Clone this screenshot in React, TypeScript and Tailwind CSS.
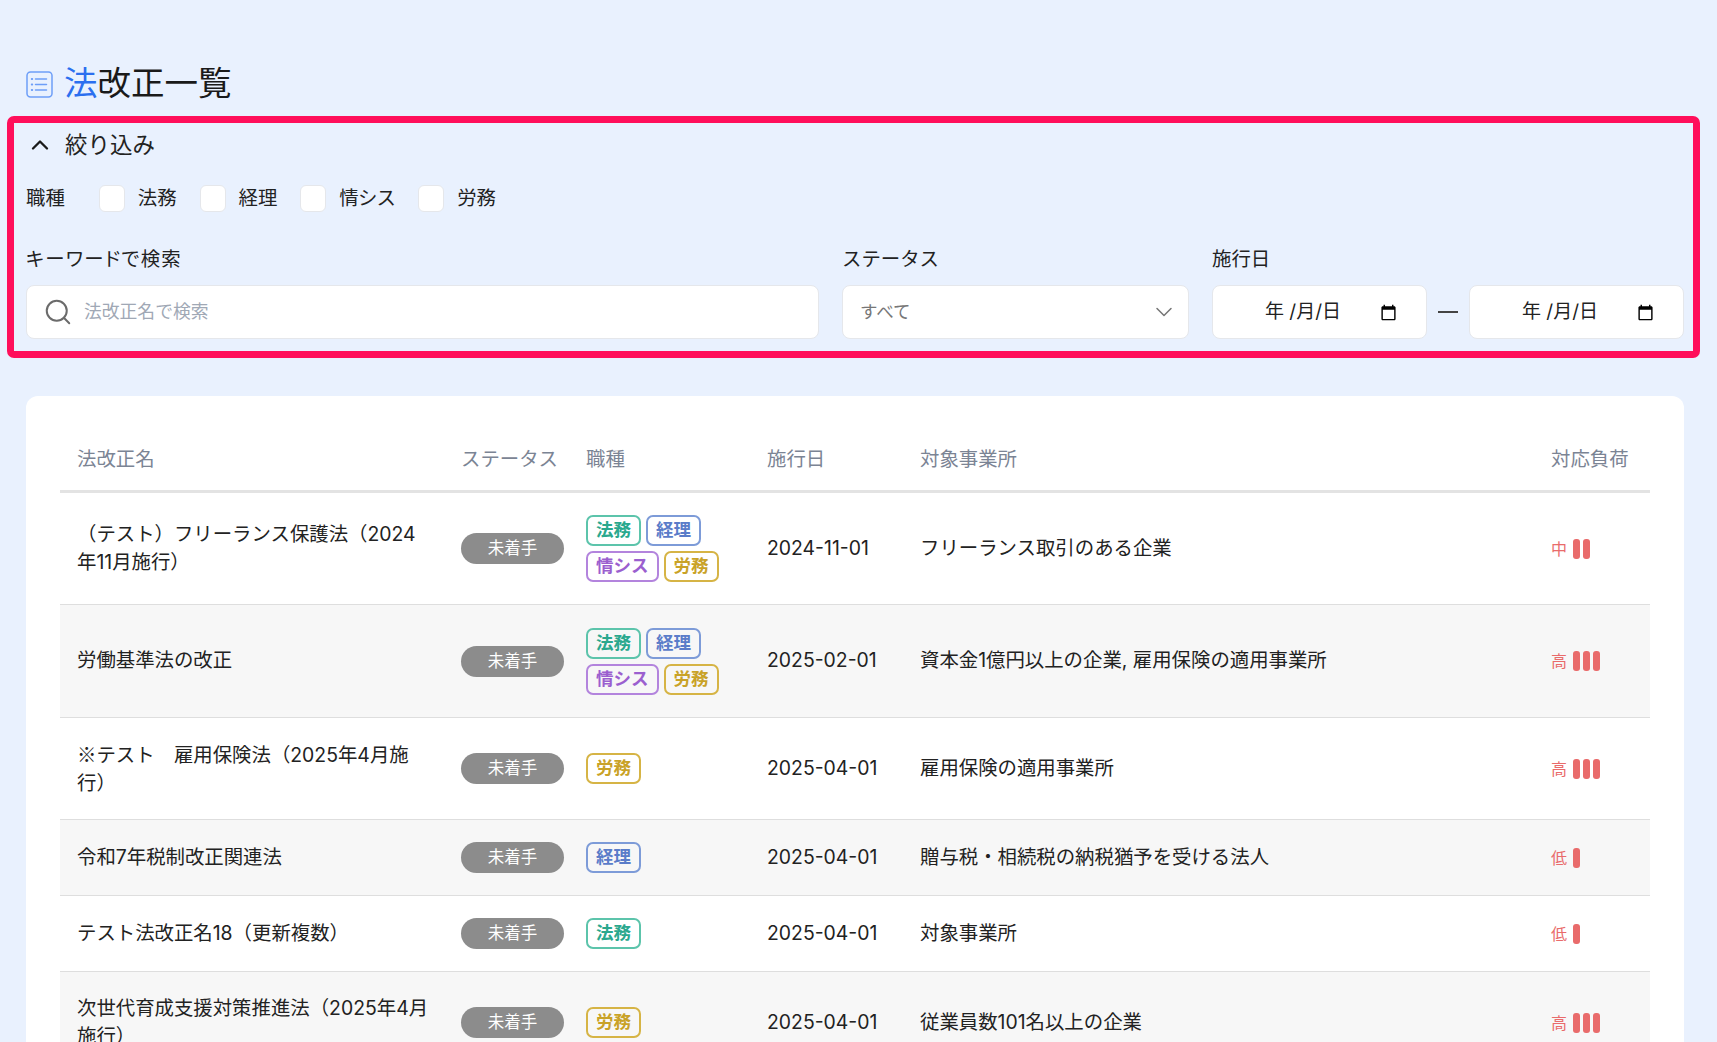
import type { ReactNode } from "react";
import { ChevronDown, ChevronUp, Search } from "lucide-react";

type Job = "法務" | "経理" | "情シス" | "労務";
type Load = "低" | "中" | "高";

type Row = {
  name: ReactNode;
  jobs: Job[];
  date: string;
  target: string;
  load: Load;
  height: string;
};

const jobStyles: Record<Job, string> = {
  法務: "border-[#5cc4ab] text-[#2aa88e]",
  経理: "border-[#7d9bd8] text-[#5a7cc9]",
  情シス: "border-[#b384dd] text-[#9b5fcf]",
  労務: "border-[#d6b445] text-[#c9a227]",
};

const loadBars: Record<Load, number> = { 低: 1, 中: 2, 高: 3 };

const rows: Row[] = [
  { name: "（テスト）フリーランス保護法（2024年11月施行）", jobs: ["法務", "経理", "情シス", "労務"], date: "2024-11-01", target: "フリーランス取引のある企業", load: "中", height: "h-[112px]" },
  { name: "労働基準法の改正", jobs: ["法務", "経理", "情シス", "労務"], date: "2025-02-01", target: "資本金1億円以上の企業, 雇用保険の適用事業所", load: "高", height: "h-[113px]" },
  {
    name: (
      <>
        <span className="font-['Noto_Sans_CJK_JP']">※</span>テスト　雇用保険法（2025年4月施行）
      </>
    ),
    jobs: ["労務"],
    date: "2025-04-01",
    target: "雇用保険の適用事業所",
    load: "高",
    height: "h-[102px]",
  },
  { name: "令和7年税制改正関連法", jobs: ["経理"], date: "2025-04-01", target: "贈与税・相続税の納税猶予を受ける法人", load: "低", height: "h-[76px]" },
  { name: "テスト法改正名18（更新複数）", jobs: ["法務"], date: "2025-04-01", target: "対象事業所", load: "低", height: "h-[76px]" },
  { name: "次世代育成支援対策推進法（2025年4月施行）", jobs: ["労務"], date: "2025-04-01", target: "従業員数101名以上の企業", load: "高", height: "h-[102px]" },
];

const headers = [
  { label: "法改正名", width: "w-[384px]" },
  { label: "ステータス", width: "w-[125px]" },
  { label: "職種", width: "w-[181px]" },
  { label: "施行日", width: "w-[153px]" },
  { label: "対象事業所", width: "" },
  { label: "対応負荷", width: "w-[116px]" },
];

function ListIcon() {
  return (
    <svg width="27" height="27" viewBox="0 0 27 27" fill="none" stroke="#6d9ef8" strokeWidth="1.5" strokeLinecap="round">
      <rect x="1" y="1" width="25" height="25" rx="3.5" />
      <path d="M9.5 8h11M9.5 13.5h11M9.5 19h11" />
      <path d="M5.8 8h.4M5.8 13.5h.4M5.8 19h.4" strokeWidth="2" />
    </svg>
  );
}

function CalendarIcon() {
  return (
    <svg width="17" height="17" viewBox="0 0 24 24" fill="#000">
      <path d="M20 3h-1V1h-2v2H7V1H5v2H4c-1.1 0-2 .9-2 2v16c0 1.1.9 2 2 2h16c1.1 0 2-.9 2-2V5c0-1.1-.9-2-2-2zm0 18H4V8h16v13z" />
    </svg>
  );
}

function DateField() {
  return (
    <div className="flex h-[54px] w-[215px] items-center justify-between rounded-[8px] border border-[#e5e7eb] bg-white pl-[52px] pr-[29px] text-[19px] text-[#222]">
      <span>年 /月/日</span>
      <CalendarIcon />
    </div>
  );
}

export default function App() {
  return (
    <div className="h-screen overflow-hidden bg-[#e9f1fe] pl-[26px] pr-[33px] pt-[65px] font-['Inter','Noto_Sans_CJK_JP',sans-serif] text-[19.4px] text-[#222]">
      <div className="flex h-[38px] items-center gap-[11px]">
        <ListIcon />
        <h1 className="text-[33.5px] font-normal leading-none text-[#1a1a1a]">
          <span className="text-[#2b6fef]">法</span>改正一覧
        </h1>
      </div>

      <section className="-ml-[19px] -mr-[16px] mt-[13px] rounded-[7px] border-[7px] border-[#ff0f5b] pb-[12px] pl-[12px] pr-[9px]">
        <button type="button" className="flex h-[44px] items-center gap-[11px] text-[22.5px] text-[#222]">
          <ChevronUp size={28} strokeWidth={2} className="text-[#1a1a1a]" />
          絞り込み
        </button>

        <div className="mt-[18px] flex h-[27px] items-center">
          <span className="mr-[34px]">職種</span>
          {(["法務", "経理", "情シス", "労務"] as Job[]).map((job) => (
            <label key={job} className="mr-[23px] flex items-center gap-[13px]">
              <span className="h-[27px] w-[26px] rounded-[6px] border border-[#e5e7eb] bg-white" />
              <span className={job === "情シス" ? "tracking-[-0.8px]" : ""}>{job}</span>
            </label>
          ))}
        </div>

        <div className="mt-[33px] flex gap-[23px]">
          <div className="flex-1">
            <p className="leading-[28px] tracking-[1.3px] [font-feature-settings:'palt']">キーワードで検索</p>
            <div className="mt-[12px] flex h-[54px] items-center gap-[11px] rounded-[8px] border border-[#e5e7eb] bg-white pl-[16px] text-[17.8px] text-[#a0a8b5]">
              <Search size={30} strokeWidth={1.6} className="text-[#6b6b6b]" />
              法改正名で検索
            </div>
          </div>
          <div className="w-[347px]">
            <p className="leading-[28px]">ステータス</p>
            <div className="mt-[12px] flex h-[54px] items-center justify-between rounded-[8px] border border-[#e5e7eb] bg-white pl-[17px] pr-[10px] text-[17.5px] text-[#777]">
              すべて
              <ChevronDown size={28} strokeWidth={1.3} className="text-[#777]" />
            </div>
          </div>
          <div className="w-[472px]">
            <p className="leading-[28px]">施行日</p>
            <div className="mt-[12px] flex items-center justify-between">
              <DateField />
              <span className="h-[2px] w-[20px] bg-[#444]" />
              <DateField />
            </div>
          </div>
        </div>
      </section>

      <div className="mt-[38px] rounded-[12px] bg-white px-[34px] pt-[34px]">
        <table className="w-full table-fixed border-separate border-spacing-0">
          <thead>
            <tr>
              {headers.map((h) => (
                <th key={h.label} className={`${h.width} h-[63px] border-b-[3px] border-[#e3e3e3] pl-[17px] text-left font-normal text-[#7b8494]`}>
                  {h.label}
                </th>
              ))}
            </tr>
          </thead>
          <tbody>
            {rows.map((row, i) => (
              <tr key={i} className={`${row.height} ${i % 2 === 1 ? "bg-[#f7f7f7]" : "bg-white"}`}>
                <td className="border-b border-[#dedede] py-[21px] pl-[17px] pr-[12px] align-middle leading-[27.5px]">
                  <div className="py-[1px]">{row.name}</div>
                </td>
                <td className="border-b border-[#dedede] pl-[17px] align-middle">
                  <span className="flex h-[31px] w-[103px] items-center justify-center rounded-full bg-[#8c8c8c] text-[16.5px] text-white">未着手</span>
                </td>
                <td className="border-b border-[#dedede] pl-[17px] pr-[16px] align-middle">
                  <div className="flex flex-wrap gap-x-[5px] gap-y-[5px]">
                    {row.jobs.map((job) => (
                      <span key={job} className={`flex h-[31px] items-center rounded-[7px] border-2 px-[8px] text-[17.5px] font-semibold ${jobStyles[job]}`}>
                        {job}
                      </span>
                    ))}
                  </div>
                </td>
                <td className="border-b border-[#dedede] pl-[17px] align-middle">{row.date}</td>
                <td className="border-b border-[#dedede] pl-[17px] align-middle">{row.target}</td>
                <td className="border-b border-[#dedede] pl-[17px] align-middle">
                  <div className="flex items-center gap-[6px] text-[16px] text-[#e96b6b]">
                    {row.load}
                    <div className="flex gap-[3px]">
                      {Array.from({ length: loadBars[row.load] }).map((_, b) => (
                        <span key={b} className="h-[20px] w-[7px] rounded-[3px] bg-[#e96b6b]" />
                      ))}
                    </div>
                  </div>
                </td>
              </tr>
            ))}
          </tbody>
        </table>
      </div>
    </div>
  );
}
